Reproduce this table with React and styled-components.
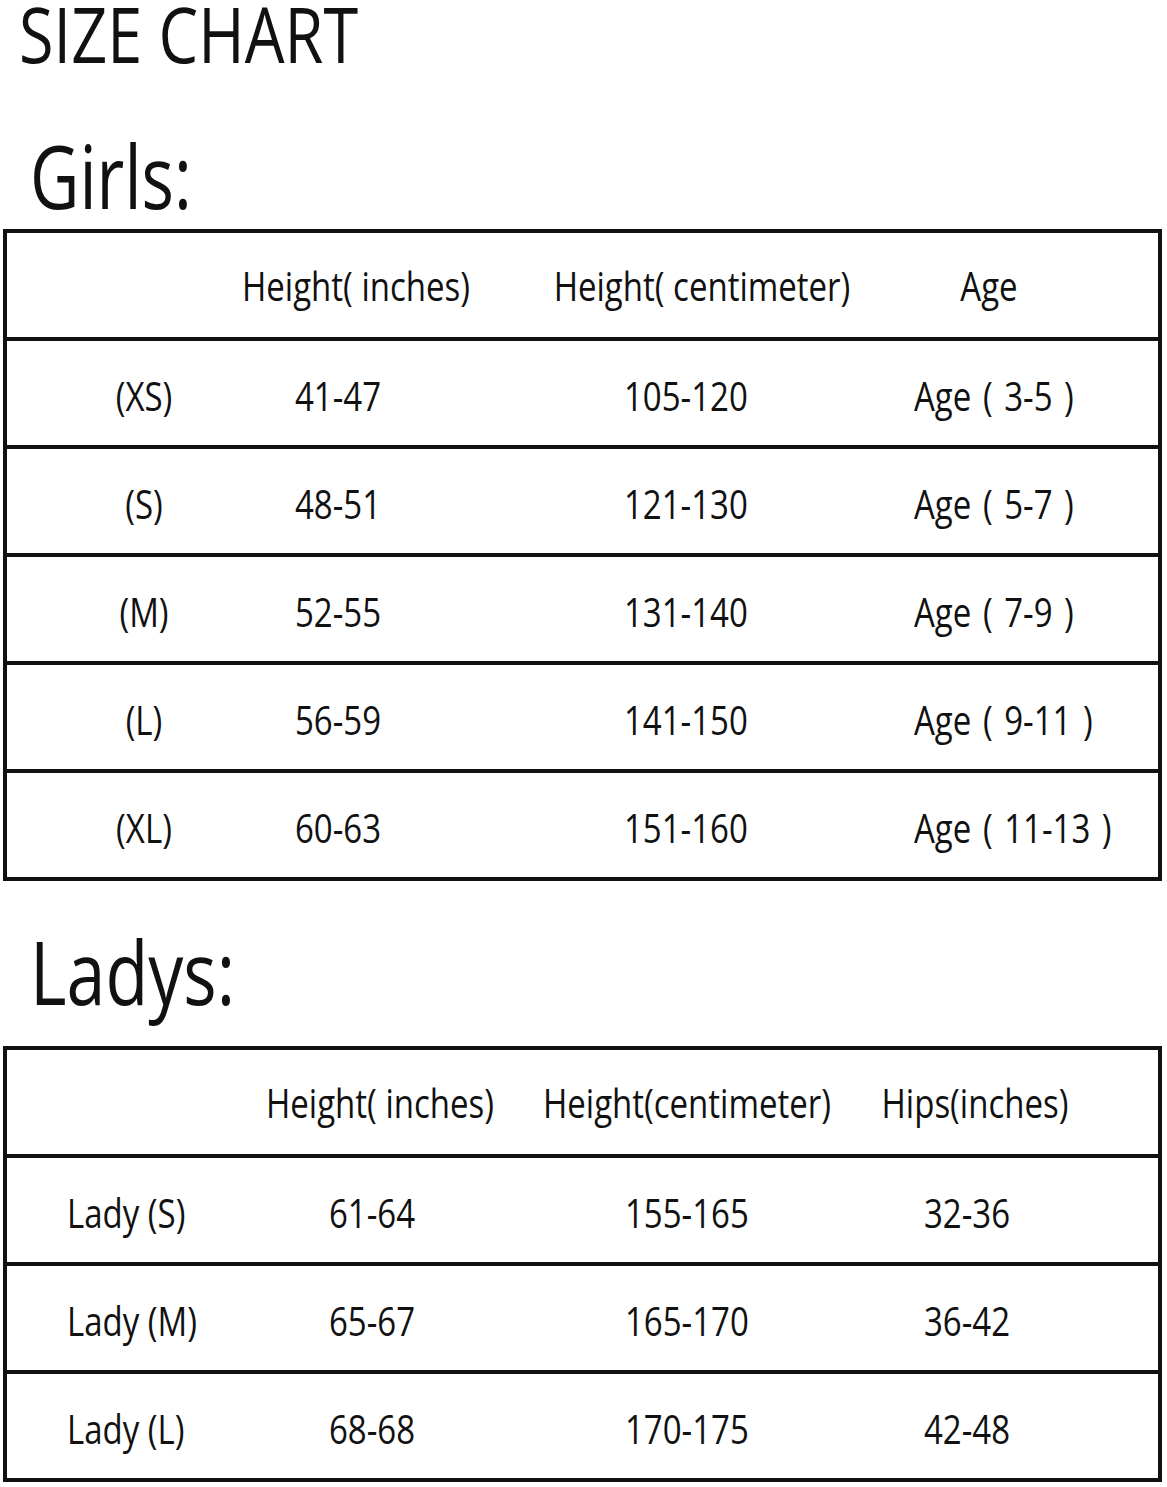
import React from 'react';
import styled, { createGlobalStyle } from 'styled-components';

const Global = createGlobalStyle`
  html, body { margin: 0; padding: 0; background: #fff; }
  body { font-family: "Open Sans", "Noto Sans", sans-serif; color: #111; }
`;

const Page = styled.div`
  width: 1167px;
  box-sizing: border-box;
  padding: 2px 5px 8px 3px;
  display: flex;
  flex-direction: column;
`;

const Stretch = styled.span`
  display: inline-block;
  white-space: pre;
  line-height: ${p => p.$lh || 'inherit'};
  transform: scaleY(${p => p.$s});
`;

const Title = styled.h1`
  margin: 0 0 0 16px;
  height: 63px;
  font-size: 63px;
  line-height: 63px;
  font-weight: 400;
`;

const Section = styled.h2`
  margin: ${p => p.$mt}px 0 0 27px;
  height: ${p => p.$size}px;
  font-size: ${p => p.$size}px;
  line-height: ${p => p.$size}px;
  font-weight: 400;
`;

const Table = styled.div`
  margin-top: ${p => p.$mt}px;
  border: 4px solid #111;
  display: flex;
  flex-direction: column;
`;

const Row = styled.div`
  display: grid;
  grid-template-columns: ${p => p.$cols};
  align-items: center;
  height: 104px;
  box-sizing: border-box;
  padding-top: ${p => (p.$head ? 3 : 6)}px;
  padding-left: ${p => p.$pad || 0}px;
  & + & { border-top: 4px solid #111; height: 108px; }
`;

const Cell = styled.div`
  font-size: 33px;
  line-height: 1;
  text-align: ${p => p.$align || 'left'};
  padding-left: ${p => p.$indent || 0}px;
  word-spacing: ${p => p.$ws || 0}px;
`;

const S = 1.19;

const girls = [
  ['(XS)', '41-47', '105-120', 'Age ( 3-5 )'],
  ['(S)', '48-51', '121-130', 'Age ( 5-7 )'],
  ['(M)', '52-55', '131-140', 'Age ( 7-9 )'],
  ['(L)', '56-59', '141-150', 'Age ( 9-11 )'],
  ['(XL)', '60-63', '151-160', 'Age ( 11-13 )'],
];

const ladys = [
  ['Lady (S)', '61-64', '155-165', '32-36'],
  ['Lady (M)', '65-67', '165-170', '36-42'],
  ['Lady (L)', '68-68', '170-175', '42-48'],
];

export default function App() {
  return (
    <Page>
      <Global />
      <Title><Stretch $s={1.22} $lh={0.8}>SIZE CHART</Stretch></Title>
      <Section $mt={77} $size={68}><Stretch $s={1.28} $lh={0.85}>Girls:</Stretch></Section>
      <Table $mt={19}>
        <Row $head $cols="205px 288px 404px 170px">
          <Cell />
          <Cell $align="center"><Stretch $s={S}>Height( inches)</Stretch></Cell>
          <Cell $align="center"><Stretch $s={S}>Height( centimeter)</Stretch></Cell>
          <Cell $align="center"><Stretch $s={S}>Age</Stretch></Cell>
        </Row>
        {girls.map(r => (
          <Row key={r[0]} $cols="274px 329px 290px 1fr">
            <Cell $align="center"><Stretch $s={S}>{r[0]}</Stretch></Cell>
            <Cell $indent={14}><Stretch $s={S}>{r[1]}</Stretch></Cell>
            <Cell $indent={14}><Stretch $s={S}>{r[2]}</Stretch></Cell>
            <Cell $indent={14} $ws={3}><Stretch $s={S}>{r[3]}</Stretch></Cell>
          </Row>
        ))}
      </Table>
      <Section $mt={56} $size={70}><Stretch $s={1.245} $lh={0.85}>Ladys:</Stretch></Section>
      <Table $mt={39}>
        <Row $head $cols="245px 256px 358px 218px">
          <Cell />
          <Cell $align="center"><Stretch $s={S}>Height( inches)</Stretch></Cell>
          <Cell $align="center"><Stretch $s={S}>Height(centimeter)</Stretch></Cell>
          <Cell $align="center"><Stretch $s={S}>Hips(inches)</Stretch></Cell>
        </Row>
        {ladys.map(r => (
          <Row key={r[0]} $pad={60} $cols="262px 296px 299px 1fr">
            <Cell><Stretch $s={S}>{r[0]}</Stretch></Cell>
            <Cell><Stretch $s={S}>{r[1]}</Stretch></Cell>
            <Cell><Stretch $s={S}>{r[2]}</Stretch></Cell>
            <Cell><Stretch $s={S}>{r[3]}</Stretch></Cell>
          </Row>
        ))}
      </Table>
    </Page>
  );
}
